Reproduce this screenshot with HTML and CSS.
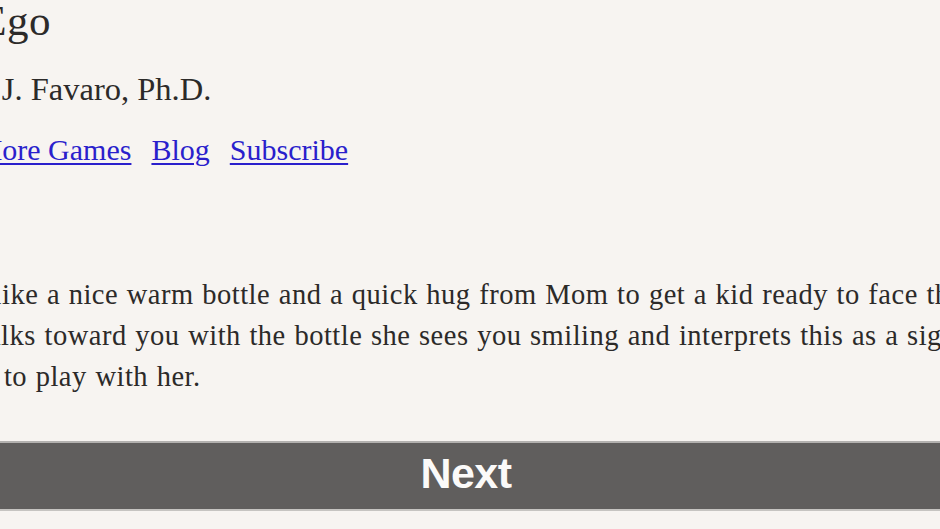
FILE: index.html
```html
<!DOCTYPE html>
<html lang="en">
<head>
<meta charset="utf-8">
<title>Id &amp; Ego</title>
<link rel="stylesheet" href="styles.css">
</head>
<body>
<div class="page">
  <header class="head">
    <h1 class="title">Id &amp; Ego</h1>
    <p class="author">Thomas J. Favaro, Ph.D.</p>
    <nav class="links">
      <a href="#">Back</a>
      <a href="#">More Games</a>
      <a href="#">Blog</a>
      <a href="#">Subscribe</a>
    </nav>
  </header>
  <main class="story">
    <p class="passage">
      <span class="line line-a">Nothing like a nice warm bottle and a quick hug from Mom to get a kid ready to face the day.</span>
      <span class="line line-b">Mom walks toward you with the bottle she sees you smiling and interprets this as a sign that</span>
      <span class="line line-c">you want to play with her.</span>
    </p>
  </main>
</div>
<button class="next" type="button">Next</button>
</body>
</html>
```

FILE: styles.css
```css
html, body {
  margin: 0;
  padding: 0;
  overflow: hidden;
  background: #f7f4f1;
}

body {
  width: 940px;
  height: 529px;
  color: #2c2a29;
  font-family: "Liberation Serif", "Times New Roman", serif;
}

.page {
  margin-left: -103px;
  white-space: nowrap;
}

.title {
  margin: -4px 0 0 -10px;
  font-size: 43px;
  letter-spacing: 0.5px;
  line-height: 50px;
  font-weight: normal;
}

.author {
  margin: 23px 0 0 -8px;
  font-size: 32.5px;
  line-height: 40px;
}

.links {
  margin: 21px 0 0 -3px;
  display: flex;
  gap: 20px;
  font-size: 30px;
  line-height: 40px;
}

.links a {
  color: #2a1fcc;
  text-decoration: underline;
  text-underline-offset: 3px;
  text-decoration-thickness: 2px;
}

.passage {
  margin: 104px 0 0 -2px;
  font-size: 28.5px;
  letter-spacing: 0.5px;
  word-spacing: 1px;
  line-height: 41px;
}

.line {
  display: block;
}

.line-a {
  text-indent: -7px;
}

.line-c {
  text-indent: -10px;
}

.next {
  display: block;
  box-sizing: border-box;
  width: 956px;
  margin: 44px 0 0 -12px;
  height: 70px;
  padding: 0 0 6px;
  border: 0;
  border-top: 2px solid #b3b1af;
  border-bottom: 2px solid #c6c4c1;
  background: #605e5d;
  color: #fbfaf9;
  font-family: "Liberation Sans", Arial, sans-serif;
  font-weight: bold;
  font-size: 43px;
  letter-spacing: -0.5px;
  line-height: 60px;
  text-align: center;
}
```
